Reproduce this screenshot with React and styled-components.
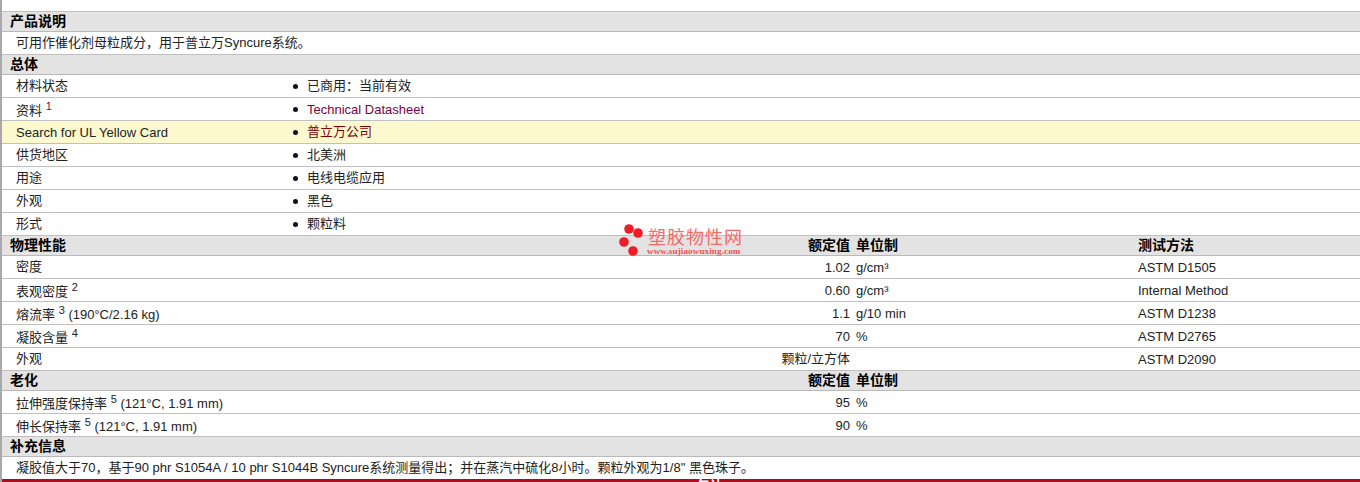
import React from 'react';
import styled, { createGlobalStyle } from 'styled-components';

const GlobalStyle = createGlobalStyle`
  html, body {
    margin: 0;
    padding: 0;
    background: #ffffff;
  }
  body {
    font-family: "Liberation Sans", "Noto Sans CJK SC", sans-serif;
    font-size: 13px;
    color: #222222;
  }
`;

const Page = styled.div`
  position: relative;
  width: 1360px;
  height: 482px;
  overflow: hidden;
  box-sizing: border-box;
  padding-top: 11px;
  border-left: 2px solid #a9a9a9;
`;

const Sheet = styled.div`
  border-top: 1px solid #c0c0c0;
`;

const Header = styled.div`
  display: grid;
  grid-template-columns: 278px 1fr;
  height: 19px;
  line-height: 18px;
  border-bottom: 1px solid #b9b9b9;
  background: #e3e3e3;
  align-items: start;
  font-weight: bold;
  color: #000000;
  font-size: 14px;
  padding-left: 8px;
`;

const PropHeader = styled(Header)`
  grid-template-columns: 738px 102px 288px 1fr;
`;

const HeadCell = styled.span`
  text-align: ${(p) => (p.$right ? 'right' : 'left')};
  padding-left: ${(p) => p.$pad || 0}px;
`;

const Row = styled.div`
  display: grid;
  grid-template-columns: 276px 1fr;
  height: 22px;
  line-height: 22px;
  border-bottom: 1px solid #c0c0c0;
  align-items: start;
  padding-left: 14px;
  background: ${(p) => (p.$highlight ? '#fdf9cf' : '#ffffff')};
`;

const PlainRow = styled(Row)`
  display: flex;
  border-bottom: ${(p) => (p.$last ? 'none' : '1px solid #c0c0c0')};
`;

const PropRow = styled(Row)`
  grid-template-columns: 700px 134px 288px 1fr;
`;

const Label = styled.span`
  white-space: nowrap;
  padding-top: ${(p) => (p.$noted ? 2 : 0)}px;
`;

const LatinLabel = styled.span`
  white-space: nowrap;
  padding-top: 1px;
`;

const Note = styled.sup`
  font-size: 11px;
  line-height: 0;
  vertical-align: 5px;
  color: ${(p) => (p.$link ? '#800040' : '#222222')};
`;

const Bullet = styled.span`
  display: flex;
  align-items: center;
  &::before {
    content: '';
    width: 5px;
    height: 5px;
    margin: 0 9px 0 1px;
    border-radius: 50%;
    background: #101020;
  }
`;

const DocLink = styled.span`
  color: #800040;
  padding-top: 1px;
`;

const CompanyLink = styled.span`
  color: #800000;
`;

const NumCell = styled.span`
  text-align: right;
  white-space: nowrap;
  padding-top: ${(p) => (p.$cjk ? 0 : 1)}px;
`;

const UnitCell = styled.span`
  padding: 1px 0 0 6px;
  white-space: nowrap;
`;

const MethodCell = styled.span`
  padding-top: 1px;
`;

const Footer = styled.div`
  height: 3px;
  background: #b00b20;
  overflow: hidden;
  color: #ffffff;
  font-size: 13px;
  font-weight: bold;
  line-height: 13px;
  padding-left: 695px;
`;

const Logo = styled.div`
  position: absolute;
  left: 615px;
  top: 222px;
  width: 135px;
  height: 36px;
  pointer-events: none;
`;

const LogoTitle = styled.div`
  position: absolute;
  left: 31px;
  top: 6px;
  font-size: 18px;
  line-height: 20px;
  letter-spacing: 1px;
  color: #f26a6a;
  white-space: nowrap;
`;

const LogoUrl = styled.div`
  position: absolute;
  left: 30px;
  top: 25px;
  font-family: "Liberation Serif", serif;
  font-size: 9px;
  line-height: 9px;
  letter-spacing: 0.15px;
  font-weight: bold;
  color: #f05050;
  white-space: nowrap;
`;

const general = [
  { label: '材料状态', value: '已商用：当前有效' },
  { label: '资料', note: '1', value: <DocLink>Technical Datasheet</DocLink>, link: true },
  { label: 'Search for UL Yellow Card', latin: true, value: <CompanyLink>普立万公司</CompanyLink>, highlight: true },
  { label: '供货地区', value: '北美洲' },
  { label: '用途', value: '电线电缆应用' },
  { label: '外观', value: '黑色' },
  { label: '形式', value: '颗粒料' },
];

const physical = [
  { label: '密度', num: '1.02', unit: 'g/cm³', method: 'ASTM D1505' },
  { label: '表观密度', note: '2', num: '0.60', unit: 'g/cm³', method: 'Internal Method' },
  { label: '熔流率', note: '3', extra: '(190°C/2.16 kg)', num: '1.1', unit: 'g/10 min', method: 'ASTM D1238' },
  { label: '凝胶含量', note: '4', num: '70', unit: '%', method: 'ASTM D2765' },
  { label: '外观', num: '颗粒/立方体', cjk: true, unit: '', method: 'ASTM D2090' },
];

const aging = [
  { label: '拉伸强度保持率', note: '5', extra: '(121°C, 1.91 mm)', num: '95', unit: '%' },
  { label: '伸长保持率', note: '5', extra: '(121°C, 1.91 mm)', num: '90', unit: '%' },
];

const PropLabel = ({ item }) => (
  <Label $noted={!!item.note}>
    {item.label}
    {item.note && (
      <>
        {' '}
        <Note $link={item.link}>{item.note}</Note>
      </>
    )}
    {item.extra && ` ${item.extra}`}
  </Label>
);

const PropTitle = ({ title, method }) => (
  <PropHeader>
    <span>{title}</span>
    <HeadCell $right>额定值</HeadCell>
    <HeadCell $pad={6}>单位制</HeadCell>
    <HeadCell>{method ? '测试方法' : ''}</HeadCell>
  </PropHeader>
);

const PropLine = ({ item }) => (
  <PropRow>
    <PropLabel item={item} />
    <NumCell $cjk={item.cjk}>{item.num}</NumCell>
    <UnitCell>{item.unit}</UnitCell>
    <MethodCell>{item.method}</MethodCell>
  </PropRow>
);

export default function App() {
  return (
    <>
      <GlobalStyle />
      <Page>
        <Sheet>
          <Header>产品说明</Header>
          <PlainRow>可用作催化剂母粒成分，用于普立万Syncure系统。</PlainRow>
          <Header>总体</Header>
          {general.map((item) => (
            <Row key={item.label} $highlight={item.highlight}>
              {item.latin ? <LatinLabel>{item.label}</LatinLabel> : <PropLabel item={item} />}
              <Bullet>{item.value}</Bullet>
            </Row>
          ))}
          <PropTitle title="物理性能" method />
          {physical.map((item) => (
            <PropLine key={item.label + item.num} item={item} />
          ))}
          <PropTitle title="老化" />
          {aging.map((item) => (
            <PropLine key={item.label} item={item} />
          ))}
          <Header>补充信息</Header>
          <PlainRow $last>凝胶值大于70，基于90 phr S1054A / 10 phr S1044B Syncure系统测量得出；并在蒸汽中硫化8小时。颗粒外观为1/8" 黑色珠子。</PlainRow>
          <Footer>矢让</Footer>
        </Sheet>
        <Logo>
          <svg width="30" height="36" viewBox="0 0 30 36">
            <circle cx="12" cy="7" r="4.8" fill="#ee1c25" />
            <circle cx="21" cy="11" r="4.8" fill="#ee1c25" />
            <circle cx="7" cy="20" r="4.8" fill="#ee1c25" />
            <circle cx="16" cy="29" r="4.8" fill="#ee1c25" />
          </svg>
          <LogoTitle>塑胶物性网</LogoTitle>
          <LogoUrl>www.sujiaowuxing.com</LogoUrl>
        </Logo>
      </Page>
    </>
  );
}
